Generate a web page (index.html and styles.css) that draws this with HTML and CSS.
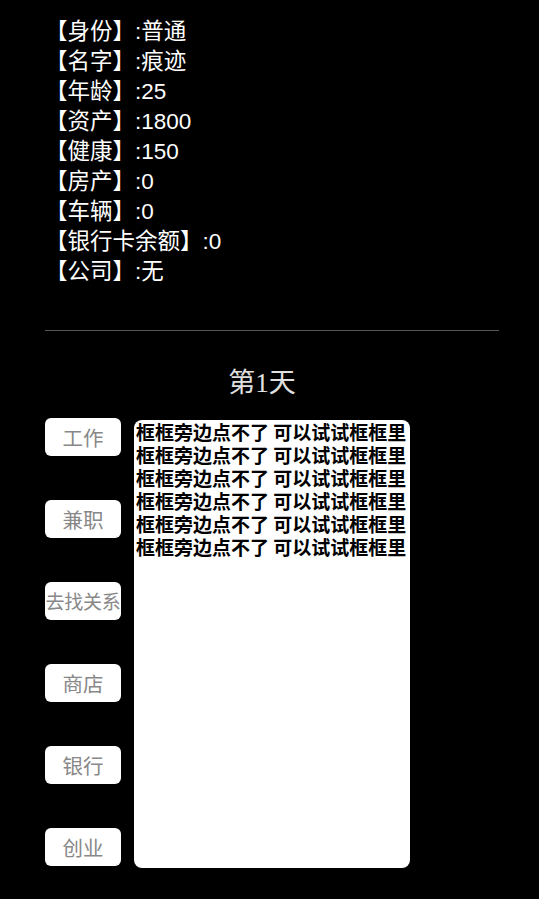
FILE: index.html
```html
<!DOCTYPE html>
<html lang="zh-CN">
<head>
<meta charset="utf-8">
<title>第1天</title>
<link rel="stylesheet" href="styles.css">
</head>
<body>
<div class="page">
  <div class="stats">
    <div class="stat">【身份】:普通</div>
    <div class="stat">【名字】:痕迹</div>
    <div class="stat">【年龄】:25</div>
    <div class="stat">【资产】:1800</div>
    <div class="stat">【健康】:150</div>
    <div class="stat">【房产】:0</div>
    <div class="stat">【车辆】:0</div>
    <div class="stat">【银行卡余额】:0</div>
    <div class="stat">【公司】:无</div>
  </div>
  <div class="divider"></div>
  <div class="day">第1天</div>
  <div class="main">
    <div class="actions">
      <button class="btn">工作</button>
      <button class="btn">兼职</button>
      <button class="btn btn-small">去找关系</button>
      <button class="btn">商店</button>
      <button class="btn">银行</button>
      <button class="btn">创业</button>
    </div>
    <div class="log">
      <div class="log-line"><span class="log-text">框框旁边点不了 可以试试框框里</span></div>
      <div class="log-line"><span class="log-text">框框旁边点不了 可以试试框框里</span></div>
      <div class="log-line"><span class="log-text">框框旁边点不了 可以试试框框里</span></div>
      <div class="log-line"><span class="log-text">框框旁边点不了 可以试试框框里</span></div>
      <div class="log-line"><span class="log-text">框框旁边点不了 可以试试框框里</span></div>
      <div class="log-line"><span class="log-text">框框旁边点不了 可以试试框框里</span></div>
    </div>
  </div>
</div>
</body>
</html>
```
FILE: styles.css
```css
html, body {
  margin: 0;
  padding: 0;
  background: #000;
}
body {
  font-family: "Liberation Sans", "Noto Sans CJK SC", sans-serif;
  color: #fff;
}
.page {
  width: 539px;
  height: 899px;
  overflow: hidden;
}
.stats {
  padding: 17px 0 0 45px;
}
.stat {
  font-size: 22.5px;
  line-height: 30px;
  height: 30px;
  white-space: nowrap;
}
.divider {
  margin: 43px 40px 0 45px;
  height: 1px;
  background: #555;
}
.day {
  margin-top: 37px;
  padding-right: 15px;
  text-align: center;
  font-family: "Liberation Serif", "Noto Sans CJK SC", serif;
  font-size: 27px;
  line-height: 30px;
  color: #e0e0e0;
}
.main {
  display: flex;
  align-items: flex-start;
  margin-top: 20px;
  padding-left: 45px;
}
.actions {
  display: flex;
  flex-direction: column;
  gap: 44px;
  width: 76px;
}
.btn {
  width: 76px;
  height: 38px;
  padding: 0;
  border: none;
  border-radius: 6px;
  background: #fff;
  color: #888;
  font-family: "Noto Sans CJK SC", sans-serif;
  font-size: 20.5px;
  line-height: 38px;
  white-space: nowrap;
  overflow: visible;
}
.btn-small {
  font-size: 19px;
  letter-spacing: -0.3px;
}
.log {
  margin: 2px 0 0 13px;
  width: 274px;
  height: 448px;
  padding: 0 0 0 2px;
  border-radius: 8px;
  background: #fff;
  color: #000;
  font-family: "Noto Sans CJK SC", sans-serif;
  font-size: 19px;
  font-weight: 700;
}
.log-line {
  height: 23px;
  white-space: nowrap;
}
.log-text {
  display: inline-block;
  line-height: 23px;
  vertical-align: top;
}
```
